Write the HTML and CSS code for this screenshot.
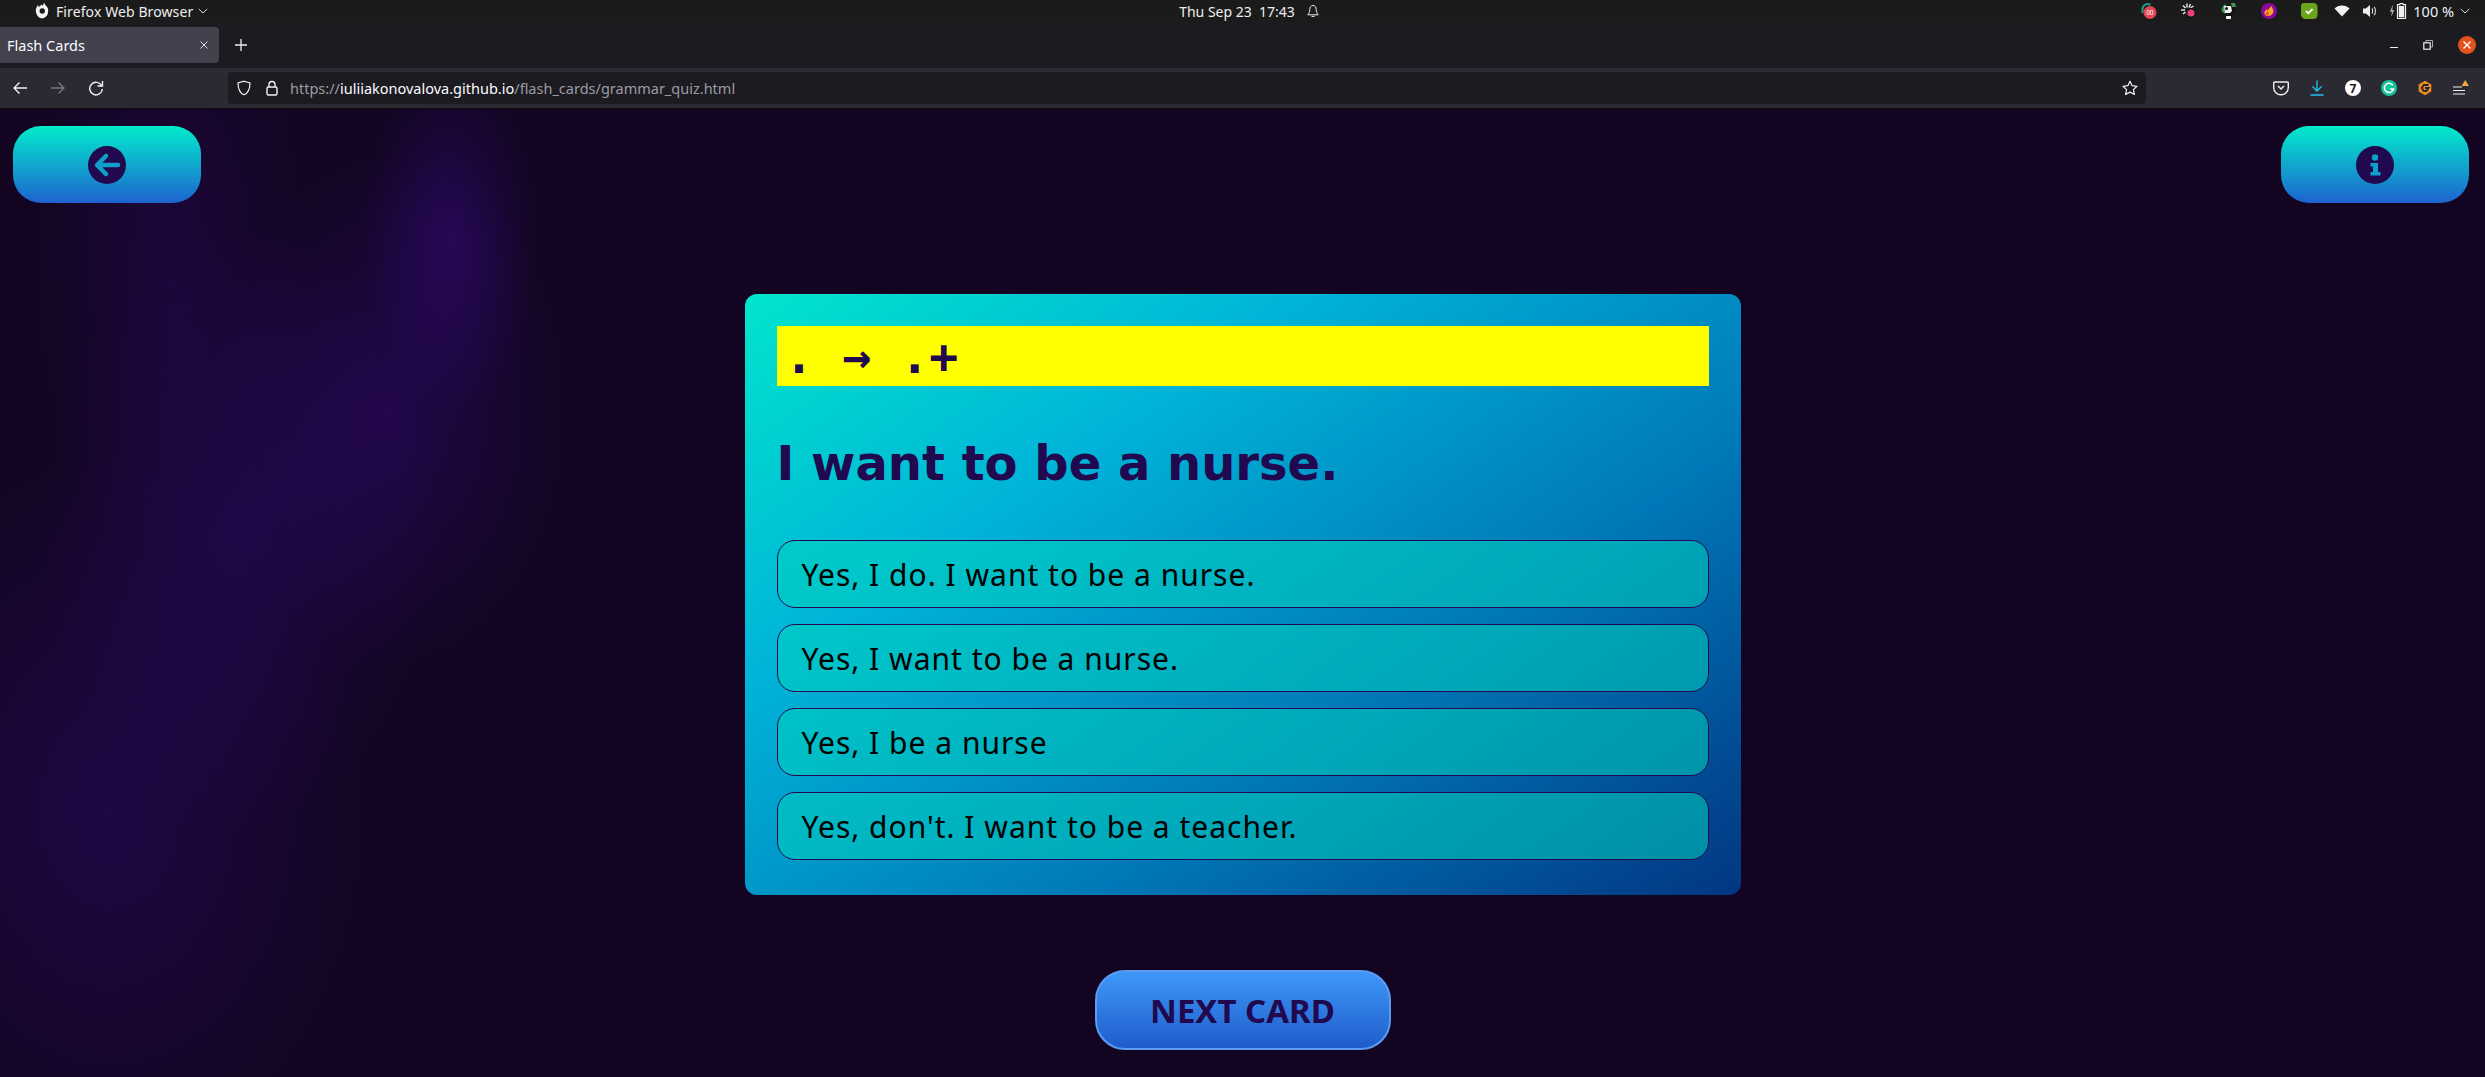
FILE: index.html
```html
<!DOCTYPE html>
<html lang="en">
<head>
<meta charset="utf-8">
<title>Flash Cards</title>
<link rel="stylesheet" href="styles.css">
</head>
<body>
<header class="sysbar">
  <div class="sys-left">
    <svg class="ico-ff" viewBox="0 0 18 18" width="18" height="18"><path fill="#f4f4f4" d="M9 2.5c.3 1.2 1 1.6 1 1.6C9.800 3 10.500 1.500 11.500.5c-.2 1.600.5 2.400 1.300 3 1.500 1.200 2.400 2.900 2.400 4.900A6.400 7.600 0 0 1 9 16.500 6.400 7.600 0 0 1 2.800 8.600c0-2.200 1-4.300 2.500-5.600-.1 1 .1 1.700.5 2.300C6.600 4 7.800 3.200 9 2.500zm.2 3.800A2.700 2.700 0 1 0 9.300 11.700 2.700 2.700 0 0 0 9.200 6.300z"/></svg>
    <span class="sys-app">Firefox Web Browser</span>
    <svg class="chev" viewBox="0 0 10 6" width="10" height="6"><path d="M.8 1l4.200 4 4.200-4" fill="none" stroke="#ddd" stroke-width="1"/></svg>
  </div>
  <div class="sys-center">
    <span>Thu Sep 23&nbsp; 17:43</span>
    <svg viewBox="0 0 14 14" width="14" height="14"><path d="M7 1.500c-2.400 0-3.200 2-3.200 4 0 2.600-1 4-2 5.300h10.400c-1-1.300-2-2.700-2-5.300 0-2-.8-4-3.200-4zM5.500 12.400h3" fill="none" stroke="#eee" stroke-width="1"/></svg>
  </div>
  <div class="sys-right">
    <svg class="tray" viewBox="0 0 18 18" width="18" height="18"><path d="M2.500 11V7a5 5 0 0 1 8-4" fill="none" stroke="#1f9c86" stroke-width="2"/><circle cx="10" cy="10.500" r="6.500" fill="#e04858"/><path d="M7 8.500h2.200v4H7zM10.500 8.500h2.200v4h-2.200z" fill="none" stroke="#f7c9cc" stroke-width=".9"/></svg>
    <svg class="tray" viewBox="0 0 18 18" width="18" height="18"><path d="M7 1.500v4M3 3.500l2.500 2.500M1 8h4M3 12l2.500-2M7 10v3M10.500 2l-1.500 3.500M13.500 4l-3 2" stroke="#e6e6e6" stroke-width="1.500" fill="none"/><circle cx="11" cy="11" r="5" fill="#111"/><circle cx="11" cy="11" r="3.600" fill="#ee3f78"/></svg>
    <svg class="tray" viewBox="0 0 18 18" width="18" height="18"><path d="M3 9a6 6 0 0 1 4-6l8 1v5l-4 8H6z" fill="#111"/><path d="M1.500 9C1.500 5.500 3 3 6 2l-1 10z" fill="#3e9a58"/><path d="M4 4h7l1 5-2 2H5z" fill="#f2f2f2"/><circle cx="6.500" cy="6.500" r="1.500" fill="#111"/><path d="M11 1h4l1 4-4 0z" fill="#3e9a58"/><path d="M6 14h5v3H6z" fill="#f2f2f2"/></svg>
    <svg class="tray" viewBox="0 0 18 18" width="18" height="18"><circle cx="9" cy="9" r="8" fill="#8b0a9c"/><path d="M4.500 12c-.5-3 1.500-3.500 2-5 .8.500 1 1.300 1 2 1-1.500 1.800-3.500 4.500-5-.5 2 2.500 3.500 1 7-.8 2-3 3-5 3-1.500 0-3-.5-3.500-2z" fill="#f5a820"/><path d="M5 12.500c.5-1.500 2-2 3-3.500.5 1.500 1.500 2 1 3.500-.5 1-3.500 1.500-4 0z" fill="#f0503c"/></svg>
    <svg class="tray" viewBox="0 0 18 18" width="18" height="18"><path d="M4 1h9c3 0 4.500 1.500 4.500 4v8c0 2.500-1.500 4-4.500 4H6c-3 0-5-2-5-5V4c0-2 1-3 3-3z" fill="#6aa51c"/><path d="M6 9l2.300 2.300L12.500 7" fill="none" stroke="#fff" stroke-width="1.800"/></svg>
    <svg class="tray-wifi" viewBox="0 0 16 12" width="16" height="12"><path d="M8 11.500L.5 3.500C2.500 1.500 5 .5 8 .5s5.500 1 7.500 3z" fill="#f2f2f2"/></svg>
    <svg class="tray-vol" viewBox="0 0 16 14" width="16" height="14"><path d="M1 4.500h2.800L8 1v12L3.800 9.500H1z" fill="#eee"/><path d="M10 4.500c.8.800.8 4.200 0 5M12.200 2.800c1.600 1.800 1.600 6.600 0 8.400" fill="none" stroke="#ddd" stroke-width="1.100"/></svg>
    <svg class="tray-bat" viewBox="0 0 20 16" width="20" height="16"><path d="M4 1.500L.8 8.800h2L2.300 14l3-7h-2z" fill="#aaa"/><path d="M11 .5h3v1.200h2.500V15.500H8.500V1.700H11z" fill="none" stroke="#eee" stroke-width="1.200"/><rect x="9.800" y="3" width="5.400" height="11.300" fill="#eee"/></svg>
    <span class="sys-pct">100 %</span>
    <svg class="chev-r" viewBox="0 0 10 6" width="10" height="6"><path d="M.8 1l4.200 4 4.200-4" fill="none" stroke="#ddd" stroke-width="1"/></svg>
  </div>
</header>

<div class="tabbar">
  <div class="tab">
    <span class="tab-title">Flash Cards</span>
    <svg viewBox="0 0 10 10" width="10" height="10"><path d="M1.500 1.500l7 7M8.500 1.500l-7 7" stroke="#ddd" stroke-width="1"/></svg>
  </div>
  <svg class="newtab" viewBox="0 0 12 12" width="12" height="12"><path d="M6 0v12M0 6h12" stroke="#eee" stroke-width="1.300"/></svg>
  <div class="win-ctrls">
    <span class="win-min"></span>
    <svg viewBox="0 0 10 10" width="10" height="10"><path d="M3 2.500V.5h6.500V7H7.500" fill="none" stroke="#aaa"/><rect x=".8" y="2.800" width="6.400" height="6.400" fill="none" stroke="#eee" stroke-width="1.200"/></svg>
    <span class="win-close"><svg viewBox="0 0 10 10" width="10" height="10"><path d="M1.500 1.500l7 7M8.500 1.500l-7 7" stroke="#fff" stroke-width="1.400"/></svg></span>
  </div>
</div>

<nav class="navbar">
  <div class="nav-btns">
    <svg viewBox="0 0 16 16" width="16" height="16"><path d="M15 8H2M7.500 2.500L2 8l5.500 5.500" fill="none" stroke="#f2f2f2" stroke-width="1.400"/></svg>
    <svg viewBox="0 0 16 16" width="16" height="16"><path d="M1 8h13M8.500 2.500L14 8l-5.500 5.500" fill="none" stroke="#77777f" stroke-width="1.400"/></svg>
    <svg viewBox="0 0 16 16" width="16" height="16"><path d="M13.500 5.500A6.300 6.300 0 1 0 14.300 9M14.500 1v5h-5" fill="none" stroke="#f2f2f2" stroke-width="1.400"/></svg>
  </div>
  <div class="urlbox">
    <svg class="u-shield" viewBox="0 0 16 16" width="16" height="16"><path d="M8 1.200l6 1.800c0 6-1.500 10-6 11.800C3.500 13 2 9 2 3z" fill="none" stroke="#f2f2f2" stroke-width="1.200"/></svg>
    <svg class="u-lock" viewBox="0 0 14 16" width="14" height="16"><path d="M4 7V4.500a3 3 0 0 1 6 0V7" fill="none" stroke="#f2f2f2" stroke-width="1.400"/><rect x="2" y="7" width="10" height="8" rx="1.500" fill="none" stroke="#f2f2f2" stroke-width="1.400"/></svg>
    <span class="url"><span class="u-dim">https://</span><span class="u-host">iuliiakonovalova.github.io</span><span class="u-dim">/flash_cards/grammar_quiz.html</span></span>
    <svg class="u-star" viewBox="0 0 16 16" width="16" height="16"><path d="M8 1.200l2.100 4.500 4.900.6-3.600 3.300 1 4.900L8 12.100l-4.400 2.400 1-4.900L1 6.300l4.900-.6z" fill="none" stroke="#f2f2f2" stroke-width="1.200" stroke-linejoin="round"/></svg>
  </div>
  <div class="nav-ext">
    <svg viewBox="0 0 16 16" width="16" height="16"><path d="M1.500 2h13c.5 0 .8.300.8.800v4.700A7.300 7.300 0 0 1 .7 7.500V2.800c0-.5.300-.8.800-.8z" fill="none" stroke="#eee" stroke-width="1.400"/><path d="M5 6l3 3 3-3" fill="none" stroke="#eee" stroke-width="1.500"/></svg>
    <svg viewBox="0 0 16 16" width="16" height="16"><path d="M8 .5v10M3.500 6.500L8 11l4.500-4.500M1.500 15h13" fill="none" stroke="#20c4f4" stroke-width="1.300"/></svg>
    <span class="ext-badge">7</span>
    <svg viewBox="0 0 16 16" width="16" height="16"><circle cx="8" cy="8" r="8" fill="#15c39a"/><path d="M11.800 5.300A4.600 4.600 0 1 0 12.500 9H9.200" fill="none" stroke="#fff" stroke-width="1.500"/></svg>
    <svg viewBox="0 0 16 16" width="16" height="16"><path d="M8 .8L14.300 4.400v7.200L8 15.200 1.700 11.600V4.400z" fill="#f08d1e"/><path d="M11.500 5H6.800L4.800 8l2 3h2.700l2-3H8" fill="none" stroke="#26262e" stroke-width="1.900"/></svg>
    <svg viewBox="0 0 16 16" width="16" height="16"><path d="M0 7h9M0 10.500h12M0 14h12" stroke="#eee" stroke-width="1.200"/><path d="M12.300 0l3.700 6H8.600z" fill="#f0a83c"/></svg>
  </div>
</nav>

<main class="page">
  <div class="top-row">
    <button class="round-btn" type="button" aria-label="Back">
      <svg viewBox="0 0 38 38" width="38" height="38"><circle cx="19" cy="19" r="19" fill="#20094f"/><path d="M30 19H10M18 10l-9 9 9 9" fill="none" stroke="#0e9fcb" stroke-width="4.500" stroke-linecap="round" stroke-linejoin="round"/></svg>
    </button>
    <button class="round-btn" type="button" aria-label="Info">
      <svg viewBox="0 0 38 38" width="38" height="38"><circle cx="19" cy="19" r="19" fill="#20094f"/><circle cx="19" cy="11.500" r="3.200" fill="#0e9fcb"/><path d="M14.500 17h7.500v9h2.500v3.500h-10V26H17v-5.500h-2.500z" fill="#0e9fcb"/></svg>
    </button>
  </div>

  <section class="card">
    <div class="hint"><span>.</span><span class="hint-arrow">→</span><span>.+</span></div>
    <h1 class="question">I want to be a nurse.</h1>
    <div class="answers">
      <button class="answer" type="button">Yes, I do. I want to be a nurse.</button>
      <button class="answer" type="button">Yes, I want to be a nurse.</button>
      <button class="answer" type="button">Yes, I be a nurse</button>
      <button class="answer" type="button">Yes, don't. I want to be a teacher.</button>
    </div>
  </section>

  <button class="next" type="button">NEXT CARD</button>
</main>
</body>
</html>
```

FILE: styles.css
```css
* { box-sizing: border-box; }
html, body { margin: 0; height: 100%; }
body {
  width: 2485px;
  height: 1077px;
  overflow: hidden;
  display: flex;
  flex-direction: column;
  font-family: "Noto Sans", "Open Sans", sans-serif;
  background: #130522;
}
svg { display: block; flex: none; }

.sysbar {
  height: 22px;
  flex: none;
  background: #1b1b1b;
  color: #eee;
  font-size: 14px;
  display: grid;
  grid-template-columns: 1fr auto 1fr;
  align-items: center;
}
.sys-left { display: flex; align-items: center; padding-left: 33px; }
.sys-app { margin-left: 5px; font-size: 14px; letter-spacing: 0.1px; }
.chev { margin-left: 5px; }
.sys-center { display: flex; align-items: center; gap: 11px; font-size: 14px; padding-left: 0; transform: translateX(7px); }
.sys-right { display: flex; align-items: center; justify-content: flex-end; padding-right: 15px; }
.tray { margin-right: 22px; }
.tray-wifi { margin-right: 12px; margin-left: -6px; }
.tray-vol { margin-right: 11px; }
.tray-bat { margin-right: 4px; }
.sys-pct { font-size: 14.500px; color: #e8f0fa; margin-right: 6px; }

.tabbar {
  height: 46px;
  flex: none;
  background: #1c1b22;
  display: flex;
  align-items: center;
  padding-top: 0;
}
.tab {
  width: 219px;
  height: 36px;
  background: #42414d;
  border-radius: 0 4px 4px 0;
  color: #fbfbfe;
  font-size: 14.500px;
  display: flex;
  align-items: center;
  justify-content: space-between;
  padding: 0 10px 0 7px;
}
.newtab { margin-left: 16px; }
.win-ctrls { margin-left: auto; display: flex; align-items: center; gap: 25px; padding-right: 9px; }
.win-min { width: 8px; height: 1px; background: #eee; margin-top: 4px; }
.win-close { width: 18px; height: 18px; border-radius: 50%; background: #e2511e; display: flex; align-items: center; justify-content: center; }

.navbar {
  height: 41px;
  flex: none;
  background: #2b2a33;
  border-bottom: 1px solid #0c0c0d;
  display: flex;
  align-items: center;
  padding: 0 16px 0 12px;
}
.nav-btns { display: flex; gap: 22px; width: 216px; }
.urlbox {
  width: 1918px;
  height: 32px;
  background: #1c1b22;
  border-radius: 4px;
  display: flex;
  align-items: center;
  padding: 0 8px;
  color: #fbfbfe;
  font-size: 14.500px;
}
.u-lock { margin-left: 13px; }
.url { margin-left: 11px; }
.u-dim { color: #9b9ba0; }
.u-host { color: #fbfbfe; }
.u-star { margin-left: auto; }
.nav-ext { margin-left: auto; display: flex; gap: 20px; align-items: center; }
.ext-badge {
  width: 16px; height: 16px; border-radius: 50%; background: #fff; color: #1c1b22;
  font-size: 12px; font-weight: 700; display: flex; align-items: center; justify-content: center;
}

.page {
  flex: 1;
  min-height: 0;
  display: flex;
  flex-direction: column;
  align-items: center;
  background:
    radial-gradient(ellipse 90px 180px at 450px 130px, rgba(50, 10, 120, .55), transparent),
    radial-gradient(ellipse 180px 260px at 390px 300px, rgba(50, 10, 120, .45), transparent),
    radial-gradient(ellipse 200px 300px at 240px 420px, rgba(50, 10, 120, .4), transparent),
    radial-gradient(ellipse 260px 360px at 110px 700px, rgba(50, 10, 120, .4), transparent),
    radial-gradient(ellipse 140px 300px at 170px 150px, rgba(50, 10, 120, .28), transparent),
    #130522;
}
.top-row {
  width: 100%;
  display: flex;
  justify-content: space-between;
  padding: 17px 16px 0 13px;
}
.round-btn {
  width: 188px;
  height: 77px;
  border: 0;
  padding: 0;
  border-radius: 28px;
  background: linear-gradient(180deg, #02eccb 0%, #1e63d0 100%);
  display: flex;
  align-items: center;
  justify-content: center;
}
.card {
  width: 996px;
  height: 601px;
  margin-top: 91px;
  padding: 32px;
  border-radius: 12px;
  background: linear-gradient(145deg, #00e5cc 0%, #00b4d8 30%, #0078b8 65%, #023682 100%);
}
.hint {
  height: 60px;
  background: #ffff00;
  color: #20094f;
  font-family: "DejaVu Sans Mono", monospace;
  font-weight: 700;
  font-size: 48px;
  line-height: 60px;
  padding-left: 8px;
  display: flex;
  gap: 29px;
}
.hint-arrow { }
.question {
  margin: 47px 0 0;
  color: #20094f;
  font-family: "DejaVu Sans", sans-serif;
  font-weight: 700;
  font-size: 48px;
  line-height: 60px;
}
.answers { margin-top: 47px; display: flex; flex-direction: column; gap: 16px; }
.answer {
  height: 68px;
  border: 1px solid #20094f;
  border-radius: 18px;
  background: rgba(0, 210, 190, .55);
  color: #000;
  font-family: "Noto Sans", sans-serif;
  font-size: 30px;
  letter-spacing: 1px;
  text-align: left;
  padding: 0 24px;
}
.next {
  width: 296px;
  height: 80px;
  margin-top: 75px;
  border: 2px solid #5a9cf2;
  border-radius: 30px;
  background: linear-gradient(180deg, #3f98f8 0%, #1e5ccb 100%);
  color: #20094f;
  font-family: "Noto Sans", sans-serif;
  font-weight: 700;
  font-size: 33px;
}
```
